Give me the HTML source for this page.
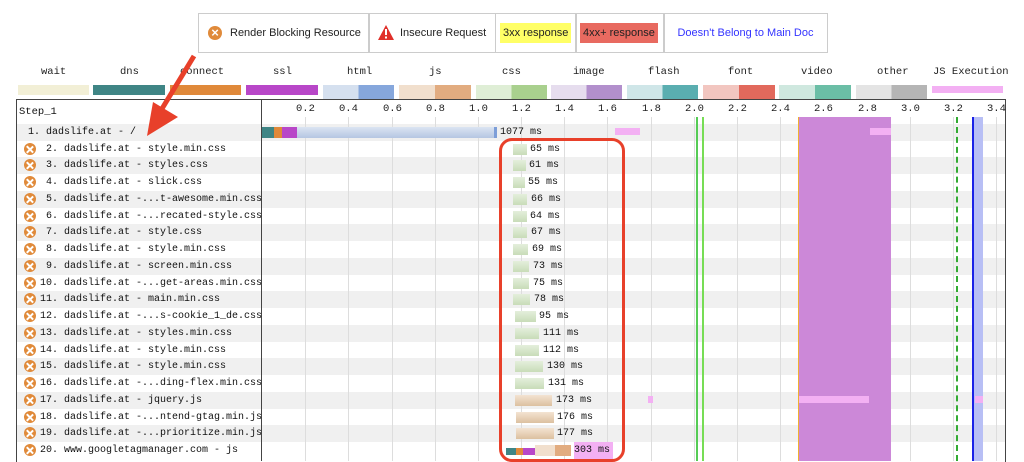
<!DOCTYPE html>
<html><head><meta charset="utf-8"><style>
body{margin:0;width:1024px;height:461px;overflow:hidden;background:#fff;font-family:"Liberation Sans",sans-serif;position:relative}
.a{position:absolute}
.leg{top:13px;height:38px;border:1px solid #ccc;font-size:11px;line-height:38px;color:#222}
.lb{font-family:"Liberation Mono",monospace;font-size:10.5px;color:#222;top:66px}
.cb{top:85px;height:10px}
.row{position:absolute;left:17px;width:988px;height:17px}
.t{position:absolute;font-family:"Liberation Mono",monospace;font-size:10px;line-height:17px;color:#111;white-space:nowrap}
.ic{position:absolute;left:7px;top:2px;width:12px;height:12px;border-radius:50%;background:#e08a3a}
.ic:before,.ic:after{content:"";position:absolute;left:5.2px;top:1.5px;width:1.6px;height:9px;background:#fff;transform:rotate(45deg)}
.ic:after{transform:rotate(-45deg)}
.g{position:absolute;top:117px;height:344px;width:1px;background:#ddd}
.gt{position:absolute;top:100px;height:17px;width:1px}
.bar{position:absolute;height:11px}
.css{background:linear-gradient(#e4efdc,#c8dcb8)}
.js{background:linear-gradient(#f3e3d2,#dcc0a0)}
.ms{position:absolute;font-family:"Liberation Mono",monospace;font-size:10px;line-height:17px;color:#111}
.sc{position:absolute;top:103px;font-family:"Liberation Mono",monospace;font-size:10.5px;color:#222}
</style></head><body>
<div class="a leg" style="left:198px;width:170px"><span class="a" style="left:9px;top:12px;width:14px;height:14px;border-radius:50%;background:#e08a3a;color:#fff;font-size:13px;line-height:14px;text-align:center;font-weight:bold">×</span><span style="margin-left:31px">Render Blocking Resource</span></div>
<div class="a leg" style="left:368px;width:126px"><svg class="a" style="left:9px;top:11px" width="16" height="15"><path d="M8 0L16 15H0Z" fill="#e0302a"/><rect x="7" y="4" width="2" height="6" fill="#fff"/><rect x="7" y="11.5" width="2" height="2" fill="#fff"/></svg><span style="margin-left:31px">Insecure Request</span></div>
<div class="a leg" style="left:495px;width:80px"><span class="a" style="left:4px;top:9px;height:20px;line-height:20px;padding:0 3px;background:#ffff66">3xx response</span></div>
<div class="a leg" style="left:575px;width:88px"><span class="a" style="left:4px;top:9px;height:20px;line-height:20px;padding:0 3px;background:#e86a60">4xx+ response</span></div>
<div class="a leg" style="left:663px;width:163px;color:#33f;text-align:center">Doesn't Belong to Main Doc</div>

<div class="a lb" style="left:41px">wait</div><div class="a cb" style="left:18px;width:71px;background:#f2efd6"></div>
<div class="a lb" style="left:120px">dns</div><div class="a cb" style="left:93px;width:72px;background:#3f8585"></div>
<div class="a lb" style="left:180px">connect</div><div class="a cb" style="left:170px;width:71px;background:#e0893a"></div>
<div class="a lb" style="left:273px">ssl</div><div class="a cb" style="left:246px;width:72px;background:#b847c8"></div>
<div class="a lb" style="left:347px">html</div><div class="a cb" style="left:323px;width:71px;height:14px;background:linear-gradient(90deg,#d5e0ef 50%,#86a7dc 50%)"></div>
<div class="a lb" style="left:429px">js</div><div class="a cb" style="left:399px;width:72px;height:14px;background:linear-gradient(90deg,#f1dfcd 50%,#e2ac80 50%)"></div>
<div class="a lb" style="left:502px">css</div><div class="a cb" style="left:476px;width:71px;height:14px;background:linear-gradient(90deg,#dfeed6 50%,#a9d08e 50%)"></div>
<div class="a lb" style="left:573px">image</div><div class="a cb" style="left:551px;width:71px;height:14px;background:linear-gradient(90deg,#e6ddee 50%,#b28fcc 50%)"></div>
<div class="a lb" style="left:648px">flash</div><div class="a cb" style="left:627px;width:71px;height:14px;background:linear-gradient(90deg,#cfe6e8 50%,#5aaeb0 50%)"></div>
<div class="a lb" style="left:728px">font</div><div class="a cb" style="left:703px;width:72px;height:14px;background:linear-gradient(90deg,#f2c6c0 50%,#e2695c 50%)"></div>
<div class="a lb" style="left:801px">video</div><div class="a cb" style="left:779px;width:72px;height:14px;background:linear-gradient(90deg,#cfe8df 50%,#6bbea6 50%)"></div>
<div class="a lb" style="left:877px">other</div><div class="a cb" style="left:856px;width:71px;height:14px;background:linear-gradient(90deg,#e4e4e4 50%,#b5b5b5 50%)"></div>
<div class="a lb" style="left:933px">JS Execution</div><div class="a cb" style="left:932px;width:71px;height:7px;top:86px;background:#f3b0f3"></div>

<div class="a" style="left:16px;top:99px;width:988px;height:362px;border:1px solid #444;border-bottom:none"></div>
<div class="row" style="top:124px;background:#f0f0f0"></div>
<div class="row" style="top:157px;background:#f0f0f0"></div>
<div class="row" style="top:191px;background:#f0f0f0"></div>
<div class="row" style="top:224px;background:#f0f0f0"></div>
<div class="row" style="top:258px;background:#f0f0f0"></div>
<div class="row" style="top:291px;background:#f0f0f0"></div>
<div class="row" style="top:325px;background:#f0f0f0"></div>
<div class="row" style="top:358px;background:#f0f0f0"></div>
<div class="row" style="top:392px;background:#f0f0f0"></div>
<div class="row" style="top:425px;background:#f0f0f0"></div>
<div class="a" style="left:261px;top:100px;width:1px;height:361px;background:#444"></div>
<div class="t" style="left:19px;top:104px;font-size:10.5px">Step_1</div>

<div class="g" style="left:305px"></div><div class="g" style="left:348px"></div><div class="g" style="left:392px"></div><div class="g" style="left:435px"></div><div class="g" style="left:478px"></div><div class="g" style="left:521px"></div><div class="g" style="left:564px"></div><div class="g" style="left:607px"></div><div class="g" style="left:651px"></div><div class="g" style="left:694px"></div><div class="g" style="left:737px"></div><div class="g" style="left:780px"></div><div class="g" style="left:823px"></div><div class="g" style="left:867px"></div><div class="g" style="left:910px"></div><div class="g" style="left:953px"></div><div class="g" style="left:996px"></div>
<div class="sc" style="left:296px">0.2</div><div class="sc" style="left:339px">0.4</div><div class="sc" style="left:383px">0.6</div><div class="sc" style="left:426px">0.8</div><div class="sc" style="left:469px">1.0</div><div class="sc" style="left:512px">1.2</div><div class="sc" style="left:555px">1.4</div><div class="sc" style="left:598px">1.6</div><div class="sc" style="left:642px">1.8</div><div class="sc" style="left:685px">2.0</div><div class="sc" style="left:728px">2.2</div><div class="sc" style="left:771px">2.4</div><div class="sc" style="left:814px">2.6</div><div class="sc" style="left:858px">2.8</div><div class="sc" style="left:901px">3.0</div><div class="sc" style="left:944px">3.2</div><div class="sc" style="left:987px">3.4</div>

<div class="a" style="left:696px;top:117px;width:2px;height:344px;background:#5c5"></div>
<div class="a" style="left:702px;top:117px;width:2px;height:344px;background:#7d5"></div>
<div class="a" style="left:799px;top:117px;width:92px;height:344px;background:#cc88d8"></div>
<div class="a" style="left:798px;top:117px;width:1px;height:344px;background:#f0b030"></div>
<div class="a" style="left:956px;top:117px;width:0;height:344px;border-left:2px dashed #3a3"></div>
<div class="a" style="left:973px;top:117px;width:10px;height:344px;background:#b8bff5"></div>
<div class="a" style="left:972px;top:117px;width:2px;height:344px;background:#1a22e8"></div>
<div class="a" style="left:615px;top:128px;width:25px;height:7px;background:#f3b0f3"></div>
<div class="a" style="left:870px;top:128px;width:21px;height:7px;background:#f3b0f3"></div>
<div class="a" style="left:799px;top:396px;width:70px;height:7px;background:#f3b0f3"></div>
<div class="a" style="left:648px;top:396px;width:5px;height:7px;background:#f3b0f3"></div>
<div class="a" style="left:975px;top:396px;width:8px;height:7px;background:#f3b0f3"></div>

<div class="t" style="left:28px;top:124px">1. dadslife.at - /</div>
<div class="row" style="top:141px"><span class="ic"></span><span class="t" style="left:29px">2. dadslife.at - style.min.css</span></div>
<div class="row" style="top:157px"><span class="ic"></span><span class="t" style="left:29px">3. dadslife.at - styles.css</span></div>
<div class="row" style="top:174px"><span class="ic"></span><span class="t" style="left:29px">4. dadslife.at - slick.css</span></div>
<div class="row" style="top:191px"><span class="ic"></span><span class="t" style="left:29px">5. dadslife.at -...t-awesome.min.css</span></div>
<div class="row" style="top:208px"><span class="ic"></span><span class="t" style="left:29px">6. dadslife.at -...recated-style.css</span></div>
<div class="row" style="top:224px"><span class="ic"></span><span class="t" style="left:29px">7. dadslife.at - style.css</span></div>
<div class="row" style="top:241px"><span class="ic"></span><span class="t" style="left:29px">8. dadslife.at - style.min.css</span></div>
<div class="row" style="top:258px"><span class="ic"></span><span class="t" style="left:29px">9. dadslife.at - screen.min.css</span></div>
<div class="row" style="top:275px"><span class="ic"></span><span class="t" style="left:23px">10. dadslife.at -...get-areas.min.css</span></div>
<div class="row" style="top:291px"><span class="ic"></span><span class="t" style="left:23px">11. dadslife.at - main.min.css</span></div>
<div class="row" style="top:308px"><span class="ic"></span><span class="t" style="left:23px">12. dadslife.at -...s-cookie_1_de.css</span></div>
<div class="row" style="top:325px"><span class="ic"></span><span class="t" style="left:23px">13. dadslife.at - styles.min.css</span></div>
<div class="row" style="top:342px"><span class="ic"></span><span class="t" style="left:23px">14. dadslife.at - style.min.css</span></div>
<div class="row" style="top:358px"><span class="ic"></span><span class="t" style="left:23px">15. dadslife.at - style.min.css</span></div>
<div class="row" style="top:375px"><span class="ic"></span><span class="t" style="left:23px">16. dadslife.at -...ding-flex.min.css</span></div>
<div class="row" style="top:392px"><span class="ic"></span><span class="t" style="left:23px">17. dadslife.at - jquery.js</span></div>
<div class="row" style="top:409px"><span class="ic"></span><span class="t" style="left:23px">18. dadslife.at -...ntend-gtag.min.js</span></div>
<div class="row" style="top:425px"><span class="ic"></span><span class="t" style="left:23px">19. dadslife.at -...prioritize.min.js</span></div>
<div class="row" style="top:442px"><span class="ic"></span><span class="t" style="left:23px">20. www.googletagmanager.com - js</span></div>

<div class="bar" style="left:262px;top:127px;width:12px;background:#3f8585"></div>
<div class="bar" style="left:274px;top:127px;width:8px;background:#e0893a"></div>
<div class="bar" style="left:282px;top:127px;width:15px;background:#b847c8"></div>
<div class="bar" style="left:297px;top:127px;width:197px;background:linear-gradient(#dbe4f2,#b5c6e2)"></div>
<div class="bar" style="left:494px;top:127px;width:3px;background:#7d9ed8"></div>
<div class="ms" style="left:500px;top:124px">1077 ms</div>

<div class="bar css" style="left:513px;top:144px;width:14px"></div><div class="ms" style="left:530px;top:141px">65 ms</div>
<div class="bar css" style="left:513px;top:160px;width:13px"></div><div class="ms" style="left:529px;top:157px">61 ms</div>
<div class="bar css" style="left:513px;top:177px;width:12px"></div><div class="ms" style="left:528px;top:174px">55 ms</div>
<div class="bar css" style="left:513px;top:194px;width:14px"></div><div class="ms" style="left:531px;top:191px">66 ms</div>
<div class="bar css" style="left:513px;top:211px;width:14px"></div><div class="ms" style="left:530px;top:208px">64 ms</div>
<div class="bar css" style="left:513px;top:227px;width:14px"></div><div class="ms" style="left:531px;top:224px">67 ms</div>
<div class="bar css" style="left:513px;top:244px;width:15px"></div><div class="ms" style="left:532px;top:241px">69 ms</div>
<div class="bar css" style="left:513px;top:261px;width:16px"></div><div class="ms" style="left:533px;top:258px">73 ms</div>
<div class="bar css" style="left:513px;top:278px;width:16px"></div><div class="ms" style="left:533px;top:275px">75 ms</div>
<div class="bar css" style="left:513px;top:294px;width:17px"></div><div class="ms" style="left:534px;top:291px">78 ms</div>
<div class="bar css" style="left:515px;top:311px;width:21px"></div><div class="ms" style="left:539px;top:308px">95 ms</div>
<div class="bar css" style="left:515px;top:328px;width:24px"></div><div class="ms" style="left:543px;top:325px">111 ms</div>
<div class="bar css" style="left:515px;top:345px;width:24px"></div><div class="ms" style="left:543px;top:342px">112 ms</div>
<div class="bar css" style="left:515px;top:361px;width:28px"></div><div class="ms" style="left:547px;top:358px">130 ms</div>
<div class="bar css" style="left:515px;top:378px;width:29px"></div><div class="ms" style="left:548px;top:375px">131 ms</div>
<div class="bar js" style="left:515px;top:395px;width:37px"></div><div class="ms" style="left:556px;top:392px">173 ms</div>
<div class="bar js" style="left:516px;top:412px;width:38px"></div><div class="ms" style="left:557px;top:409px">176 ms</div>
<div class="bar js" style="left:516px;top:428px;width:38px"></div><div class="ms" style="left:557px;top:425px">177 ms</div>
<div class="bar" style="left:506px;top:448px;width:10px;height:7px;background:#3f8585"></div>
<div class="bar" style="left:516px;top:448px;width:7px;height:7px;background:#e0893a"></div>
<div class="bar" style="left:523px;top:448px;width:12px;height:7px;background:#b847c8"></div>
<div class="bar" style="left:535px;top:445px;width:36px;background:linear-gradient(90deg,#f1dfcd 55%,#e2ac80 55%)"></div>
<div class="ms" style="left:574px;top:442px;background:#f3b0f3;padding-right:3px">303 ms</div>

<div class="a" style="left:499px;top:138px;width:120px;height:318px;border:3px solid #e8402a;border-radius:13px"></div>
<svg class="a" style="left:0;top:0" width="260" height="150"><line x1="194" y1="56" x2="160" y2="112" stroke="#e8402a" stroke-width="5"/><path d="M147 136L153 102L178 117Z" fill="#e8402a"/></svg>
</body></html>
